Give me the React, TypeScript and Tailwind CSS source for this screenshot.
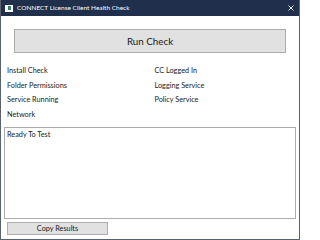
import React from "react"

const labelsLeft = ["Install Check", "Folder Permissions", "Service Running", "Network"]
const labelsRight = ["CC Logged In", "Logging Service", "Policy Service"]

export default function App() {
  return (
    <div
      className="flex h-[240px] w-[300px] flex-col overflow-hidden border-x border-b border-[#5a6170] bg-white text-[#000]"
      style={{ fontFamily: 'Lato, "Noto Sans", sans-serif' }}
    >
      {/* title bar */}
      <div className="flex h-[16px] shrink-0 items-center bg-[#1f2f4c] pl-[4px] pr-[5px]">
        <div className="flex h-[7px] w-[8px] items-center justify-center bg-white">
          <div className="h-[4px] w-[3px] bg-[#3a7a7a]" />
        </div>
        <span className="ml-[4px] text-[6.5px] leading-none text-white">CONNECT License Client Health Check</span>
        <svg className="ml-auto" width="6" height="6" viewBox="0 0 6 6">
          <path d="M0.5 0.5L5.5 5.5M5.5 0.5L0.5 5.5" stroke="#ffffff" strokeWidth="0.9" />
        </svg>
      </div>

      <div className="flex flex-1 flex-col px-[3px]">
        <button className="mx-[10px] mt-[13px] flex h-[24px] shrink-0 items-center justify-center border border-[#adadad] bg-[#e1e1e1] text-[9.8px] text-[#1a1a1a]">
          Run Check
        </button>

        <div className="mt-[11px] grid grid-cols-2 pl-[3px] text-[7.3px] leading-[14.7px] text-[#1a1a1a]">
          <div className="flex flex-col">
            {labelsLeft.map((l) => (
              <span key={l}>{l}</span>
            ))}
          </div>
          <div className="flex flex-col pl-[3px]">
            {labelsRight.map((l) => (
              <span key={l}>{l}</span>
            ))}
          </div>
        </div>

        <div className="mt-[4px] h-[92px] shrink-0 border border-[#acacac] px-[2px] pt-[2px] text-[7.3px] leading-[10px] text-[#1a1a1a]">
          Ready To Test
        </div>

        <button className="ml-[3px] mt-[3px] flex h-[13px] w-[101px] items-center justify-center border border-[#adadad] bg-[#e1e1e1] text-[7.3px] leading-none text-[#1a1a1a]">
          Copy Results
        </button>
      </div>
    </div>
  )
}
